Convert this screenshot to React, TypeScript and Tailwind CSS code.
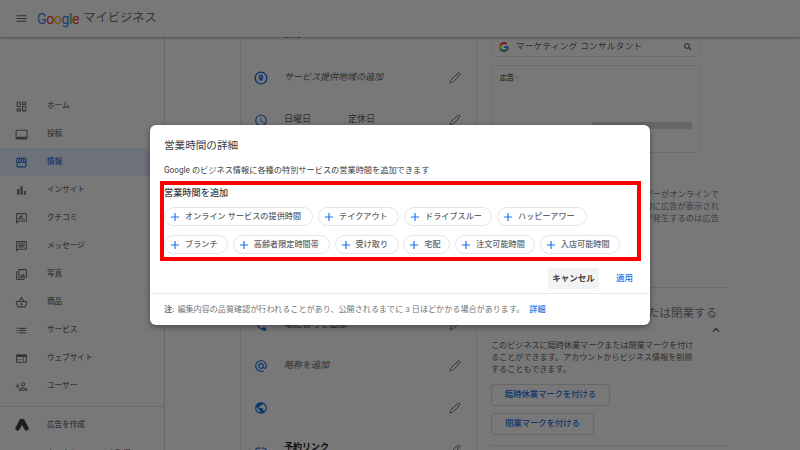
import React from "react";
import {
  MdMenu, MdOutlineDashboard, MdOutlineVideoLabel, MdOutlineStorefront, MdBarChart, MdOutlineRateReview,
  MdOutlineMessage, MdOutlinePhotoLibrary, MdOutlineShoppingBasket, MdList, MdWeb, MdOutlinePersonAdd,
  MdAdd, MdSearch, MdExpandLess, MdOutlineSchedule, MdAlternateEmail, MdPublic, MdLink, MdPhone,
} from "react-icons/md";
import { Pencil } from "lucide-react";

const nav = [
  { label: "ホーム", Icon: MdOutlineDashboard },
  { label: "投稿", Icon: MdOutlineVideoLabel },
  { label: "情報", Icon: MdOutlineStorefront, active: true },
  { label: "インサイト", Icon: MdBarChart },
  { label: "クチコミ", Icon: MdOutlineRateReview },
  { label: "メッセージ", Icon: MdOutlineMessage },
  { label: "写真", Icon: MdOutlinePhotoLibrary },
  { label: "商品", Icon: MdOutlineShoppingBasket },
  { label: "サービス", Icon: MdList },
  { label: "ウェブサイト", Icon: MdWeb },
  { label: "ユーザー", Icon: MdOutlinePersonAdd },
];

function AdsLogo() {
  return (
    <svg width="14" height="13" viewBox="0 0 14 13">
      <path d="M5 1 L9 1 L13.4 9.4 A2.2 2.2 0 0 1 9.6 11.6 L7 7 L4.4 11.6 A2.2 2.2 0 0 1 .6 9.4 Z" fill="#3c4043" />
    </svg>
  );
}

function GLogo() {
  return (
    <svg width="10" height="10" viewBox="0 0 48 48">
      <path fill="#EA4335" d="M24 9.5c3.5 0 6.7 1.2 9.2 3.6l6.9-6.9C35.9 2.4 30.5 0 24 0 14.6 0 6.5 5.4 2.6 13.2l8 6.2C12.4 13.7 17.7 9.5 24 9.5z" />
      <path fill="#4285F4" d="M46.5 24.5c0-1.6-.1-3.1-.4-4.5H24v9h12.7c-.6 2.9-2.2 5.4-4.7 7.1l7.7 6c4.5-4.2 6.8-10.3 6.8-17.6z" />
      <path fill="#FBBC05" d="M10.5 28.6c-.5-1.4-.8-3-.8-4.6s.3-3.2.8-4.6l-8-6.2C.9 16.5 0 20.1 0 24s.9 7.5 2.6 10.8l7.9-6.2z" />
      <path fill="#34A853" d="M24 48c6.5 0 11.9-2.1 15.9-5.9l-7.7-6c-2.2 1.4-4.9 2.3-8.2 2.3-6.3 0-11.6-4.2-13.5-9.9l-8 6.2C6.5 42.6 14.6 48 24 48z" />
    </svg>
  );
}

function PinCircle() {
  return (
    <svg width="14" height="14" viewBox="0 0 24 24" fill="none">
      <circle cx="12" cy="12" r="10" stroke="#1a73e8" strokeWidth="2.4" />
      <path d="M12 6.5a4 4 0 0 0-4 4c0 2.8 4 7 4 7s4-4.2 4-7a4 4 0 0 0-4-4z" fill="#1a73e8" />
      <circle cx="12" cy="10.5" r="1.3" fill="#fff" />
    </svg>
  );
}

function Row({ icon, className, children }: { icon: React.ReactNode; className: string; children?: React.ReactNode }) {
  return (
    <div className={`flex h-6 shrink-0 items-center pl-[13px] pr-[15px] ${className}`}>
      <div className="flex w-[14px] shrink-0 justify-center text-[#1a73e8]">{icon}</div>
      <div className="ml-[16px] flex-1 text-[9px] text-[#5f6368]">{children}</div>
      <Pencil size={12} strokeWidth={1.8} className="text-[#5f6368]" />
    </div>
  );
}

function Chip({ label, className }: { label: string; className: string }) {
  return (
    <div className={`flex h-[19px] items-center rounded-full border border-[#e3e5e8] pl-[3px] ${className}`}>
      <MdAdd size={14} className="shrink-0 text-[#1a73e8]" />
      <span className="ml-[3px] whitespace-nowrap text-[8.1px] font-medium tracking-[0.05px] text-[#5f6368]">{label}</span>
    </div>
  );
}

export default function App() {
  return (
    <div className="relative h-[450px] w-[800px] overflow-hidden bg-white font-['Roboto','Noto_Sans_CJK_JP',sans-serif]">
      <header className="relative z-10 flex h-[37px] items-center bg-white pl-[15px] shadow-[0_1px_3px_rgba(0,0,0,0.35)]">
        <MdMenu size={13} className="text-[#5f6368]" />
        <div className="ml-[9px] flex items-center text-[14px] leading-none tracking-[-0.35px]">
          <span className="text-[#4285f4]">G</span>
          <span className="text-[#ea4335]">o</span>
          <span className="text-[#fbbc05]">o</span>
          <span className="text-[#4285f4]">g</span>
          <span className="text-[#34a853]">l</span>
          <span className="text-[#ea4335]">e</span>
        </div>
        <span className="ml-[4px] text-[12.3px] text-[#70757a]">マイビジネス</span>
      </header>

      <main className="flex h-[413px] overflow-hidden">
        <aside className="flex w-[165px] shrink-0 flex-col border-r border-[#e0e0e0] pt-[55px]">
          {nav.map(({ label, Icon, active }) => (
            <div key={label} className={`flex h-7 shrink-0 items-center pl-[15px] ${active ? "bg-[#e8f0fe] text-[#1a73e8]" : "text-[#70757a]"}`}>
              <Icon size={13} />
              <span className="ml-[19px] text-[7.6px] font-medium">{label}</span>
            </div>
          ))}
          <div className="mt-[6px] flex h-[36px] shrink-0 items-center border-t border-[#e0e0e0] pl-[15px] text-[#70757a]">
            <AdsLogo />
            <span className="ml-[18px] text-[7.6px] font-medium">広告を作成</span>
          </div>
          <div className="flex h-6 shrink-0 items-center pl-[15px] text-[#70757a]">
            <MdWeb size={13} />
            <span className="ml-[19px] text-[7.6px] font-medium">カスタムドメインを取得</span>
          </div>
        </aside>

        <div className="w-[75px] shrink-0" />

        <section className="flex w-[237px] shrink-0 flex-col border-x border-[#e6e6e6]">
          <div className="ml-[43px] -mt-[8px] h-[14px] shrink-0 text-[9px] text-[#5f6368]">9:10</div>
          <Row icon={<PinCircle />} className="mt-[23px]"><i>サービス提供地域の追加</i></Row>
          <Row icon={<MdOutlineSchedule size={15} />} className="mt-[18px]">
            <div className="flex"><span className="w-[64px]">日曜日</span><span>定休日</span></div>
          </Row>
          <Row icon={<MdPhone size={15} />} className="mt-[181px]">電話番号を追加</Row>
          <Row icon={<MdAlternateEmail size={14} />} className="mt-[17px]"><i>略称を追加</i></Row>
          <Row icon={<MdPublic size={14} />} className="mt-[18px]" />
          <Row icon={<MdLink size={15} />} className="mt-[18px]"><b className="-mt-[4px] block text-[#202124]">予約リンク</b></Row>
        </section>

        <section className="flex w-[251px] shrink-0 flex-col pl-[14px]">
          <div className="flex h-[20px] w-[210px] shrink-0 items-center rounded-b-md border border-t-0 border-[#e8e8e8] pl-[7px] pr-[7px]">
            <GLogo />
            <span className="ml-[7px] flex-1 text-[8.5px] tracking-[0.4px] text-[#5f6368]">マーケティング コンサルタント</span>
            <MdSearch size={10} className="text-[#3c4043]" />
          </div>
          <div className="mt-[8px] flex h-[88px] w-[210px] shrink-0 flex-col rounded-md border border-[#e8e8e8] px-[8px] pt-[7px]">
            <span className="text-[7px] font-bold text-[#5f6368]">広告 ·</span>
            <div className="ml-auto mt-[38px] h-[7px] w-[100px] bg-[#dadce0]" />
          </div>
          <div className="mt-[35px] h-[48px] w-[236px] pl-[120px] text-[8.3px] leading-[12px] text-[#80868b]">
            <p className="whitespace-nowrap pr-[8px] text-right">ユーザーがオンラインで</p>
            <p className="whitespace-nowrap pr-[8px] text-right">時に広告が表示され</p>
            <p className="whitespace-nowrap pr-[8px] text-right">が発生するのは広告</p>
          </div>
          <div className="mt-[51px] h-px w-[236px] shrink-0 bg-[#e0e0e0]" />
          <div className="mt-[16px] w-[226px] text-right text-[11.5px] leading-[18px] text-[#80868b]">臨時休業または閉業する</div>
          <div className="flex w-[232px] justify-end"><MdExpandLess size={14} className="mt-px text-[#3c4043]" /></div>
          <p className="mt-[2px] w-[208px] text-[8.1px] leading-[12.2px] text-[#5f6368]">このビジネスに臨時休業マークまたは閉業マークを付けることができます。アカウントからビジネス情報を削除することもできます。</p>
          <button className="mt-[8px] flex h-[22px] w-[119px] shrink-0 items-center justify-center rounded-[3px] border border-[#dadce0] text-[8.3px] font-medium text-[#1a73e8]">臨時休業マークを付ける</button>
          <button className="mt-[7px] flex h-[22px] w-[103px] shrink-0 items-center justify-center rounded-[3px] border border-[#dadce0] text-[8.3px] font-medium text-[#1a73e8]">閉業マークを付ける</button>
          <div className="mt-[10px] h-px w-[236px] shrink-0 bg-[#e0e0e0]" />
        </section>
      </main>

      <div className="absolute inset-0 z-20 flex items-center justify-center bg-black/[0.53]">
        <div className="flex h-[200px] w-[500px] flex-col overflow-hidden rounded-[6px] bg-white shadow-[0_2px_6px_rgba(0,0,0,0.4)]">
          <h2 className="ml-[14px] mt-[13px] text-[10.6px] leading-[16px] text-[#3c4043]">営業時間の詳細</h2>
          <p className="ml-[14px] mt-[10px] text-[8.2px] leading-[12px] text-[#3c4043]">Google のビジネス情報に各種の特別サービスの営業時間を追加できます</p>
          <div className="ml-[10px] mt-[5px] flex h-[80px] w-[481px] shrink-0 flex-col border-[4px] border-[#ff0000]">
            <div className="mt-px text-[9.2px] font-medium leading-[14px] text-[#3c4043]">営業時間を追加</div>
            <div className="mt-[7px] flex gap-[5px]">
              <Chip label="オンライン サービスの提供時間" className="w-[149px]" />
              <Chip label="テイクアウト" className="w-[81px]" />
              <Chip label="ドライブスルー" className="w-[88px]" />
              <Chip label="ハッピーアワー" className="w-[90px]" />
            </div>
            <div className="mt-[9px] flex gap-[4.75px]">
              <Chip label="ブランチ" className="w-[64px]" />
              <Chip label="高齢者限定時間帯" className="w-[97px]" />
              <Chip label="受け取り" className="w-[64px]" />
              <Chip label="宅配" className="w-[47px]" />
              <Chip label="注文可能時間" className="w-[80px]" />
              <Chip label="入店可能時間" className="w-[80px]" />
            </div>
          </div>
          <div className="mt-[7px] flex items-center justify-end pr-[17px]">
            <button className="flex h-[21px] w-[51px] items-center justify-center rounded-[2px] bg-[#f1f3f4] text-[8.5px] font-bold text-[#3c4043]">キャンセル</button>
            <button className="ml-[17px] text-[8.5px] font-medium text-[#1a73e8]">適用</button>
          </div>
          <div className="mt-[4px] flex h-[32px] items-center border-t border-[#e8eaed] pl-[14px] text-[8.1px] text-[#70757a]">
            <b className="font-bold">注:</b>
            <span className="ml-[3px]">編集内容の品質確認が行われることがあり、公開されるまでに 3 日ほどかかる場合があります。</span>
            <span className="ml-[5px] font-medium text-[#1a73e8]">詳細</span>
          </div>
        </div>
      </div>
    </div>
  );
}
